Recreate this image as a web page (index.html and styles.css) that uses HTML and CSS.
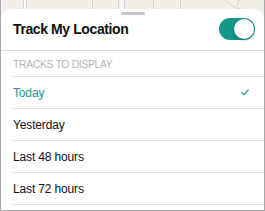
FILE: index.html
```html
<!DOCTYPE html>
<html>
<head>
<meta charset="utf-8">
<link rel="stylesheet" href="styles.css">
</head>
<body>
<div class="frame">
  <div class="map">
    <svg class="map-svg" width="263" height="12" viewBox="0 0 263 12">
      <g stroke="#d6d3cc" stroke-width="1" fill="none">
        <line x1="22.5" y1="0" x2="22.5" y2="12"/>
        <line x1="25.5" y1="0" x2="25.5" y2="12"/>
        <line x1="91.5" y1="0" x2="91.5" y2="12"/>
        <line x1="117.5" y1="0" x2="117.5" y2="12"/>
        <line x1="123.5" y1="0" x2="123.5" y2="12"/>
        <line x1="152.5" y1="0" x2="152.5" y2="12"/>
        <line x1="179.5" y1="0" x2="179.5" y2="12"/>
        <path d="M224 0 Q230 7 240 9"/>
        <path d="M238 0 L236 6"/>
      </g>
      <g stroke="#ffffff" stroke-width="2" fill="none">
        <line x1="24" y1="0" x2="24" y2="12"/>
        <line x1="120.5" y1="0" x2="120.5" y2="12"/>
      </g>
    </svg>
  </div>
  <div class="sheet">
    <div class="handle"></div>
    <div class="header">
      <span class="title">Track My Location</span>
      <span class="toggle"><span class="knob"></span></span>
    </div>
    <div class="section">TRACKS TO DISPLAY</div>
    <ul class="list">
      <li class="row selected"><span>Today</span>
        <svg class="check" width="8" height="7" viewBox="0 0 8 7"><path d="M0.8 3.6 L3 5.8 L7.2 0.8" stroke="#1a968a" stroke-width="1.2" fill="none" stroke-linecap="round" stroke-linejoin="round"/></svg>
      </li>
      <li class="row"><span>Yesterday</span></li>
      <li class="row"><span>Last 48 hours</span></li>
      <li class="row"><span>Last 72 hours</span></li>
    </ul>
  </div>
</div>
</body>
</html>
```
FILE: styles.css
```css
html, body {
  margin: 0;
  padding: 0;
}
body {
  width: 265px;
  height: 211px;
  overflow: hidden;
  font-family: "Liberation Sans", Arial, sans-serif;
}
.frame {
  box-sizing: border-box;
  width: 265px;
  height: 211px;
  border: 1px solid #a9a9a9;
  border-top: none;
  background: #f2efe9;
  display: flex;
  flex-direction: column;
  overflow: hidden;
}
.map {
  height: 9px;
  flex: none;
  overflow: hidden;
}
.map-svg {
  display: block;
}
.sheet {
  position: relative;
  flex: 1;
  background: #ffffff;
  border-radius: 10px 10px 0 0;
  display: flex;
  flex-direction: column;
}
.handle {
  position: absolute;
  top: 3px;
  left: 50%;
  margin-left: -12px;
  width: 24px;
  height: 3px;
  border-radius: 2px;
  background: #c3c7cb;
}
.header {
  height: 41px;
  border-bottom: 1px solid #dcdcdc;
  display: flex;
  align-items: center;
  justify-content: space-between;
  padding: 0 9px 0 12px;
}
.title {
  font-size: 14px;
  font-weight: bold;
  color: #111111;
  letter-spacing: -0.4px;
  margin-top: -1px;
}
.toggle {
  position: relative;
  width: 36px;
  height: 22px;
  border-radius: 11px;
  background: #17968a;
  margin-top: -2px;
}
.knob {
  position: absolute;
  right: 1px;
  top: 1px;
  width: 20px;
  height: 20px;
  border-radius: 50%;
  background: #ffffff;
  box-shadow: 0 1px 3px rgba(0,0,0,0.3);
}
.section {
  height: 25px;
  margin-left: 12px;
  border-bottom: 1px solid #e2e2e2;
  display: flex;
  align-items: center;
  font-size: 10.5px;
  letter-spacing: -0.4px;
  color: #b5b5b5;
}
.list {
  list-style: none;
  margin: 0;
  padding: 0;
}
.row {
  height: 31px;
  margin-left: 12px;
  border-bottom: 1px solid #e2e2e2;
  display: flex;
  align-items: center;
  justify-content: space-between;
  padding-right: 15px;
  font-size: 12px;
  letter-spacing: -0.15px;
  color: #111111;
}
.row.selected {
  color: #1a968a;
}
.check {
  display: block;
}
```
